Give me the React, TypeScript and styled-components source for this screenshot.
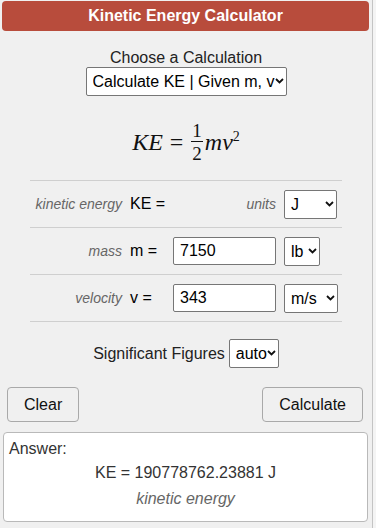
import React from 'react';
import styled, { createGlobalStyle } from 'styled-components';

const GlobalStyle = createGlobalStyle`
  html, body {
    margin: 0;
    padding: 0;
    background: #f4f4f4;
    font-family: "Liberation Sans", Arial, sans-serif;
    color: #222;
  }
`;

const Page = styled.div`
  width: 373px;
  min-height: 528px;
  box-sizing: border-box;
  background: #f0f0f0;
  border-right: 1px solid #c4c4c4;
  padding-top: 1px;
`;

const Header = styled.h1`
  margin: 0 3px 0 2px;
  height: 30px;
  background: #b84c3c;
  border-radius: 4px;
  color: #fff;
  font-size: 16px;
  font-weight: bold;
  display: flex;
  align-items: center;
  justify-content: center;
`;

const Chooser = styled.div`
  display: flex;
  flex-direction: column;
  align-items: center;
  margin-top: 17px;
  font-size: 16px;
`;

const ChooseLabel = styled.div`
  line-height: 19px;
`;

const SelectBox = styled.span<{ $w: number }>`
  position: relative;
  display: inline-block;
  width: ${(p) => p.$w}px;
  height: 29px;
`;

const Select = styled.select`
  appearance: none;
  width: 100%;
  height: 100%;
  font-family: "Liberation Sans", Arial, sans-serif;
  font-size: 16px;
  color: #000;
  background: #fff;
  border: 1px solid #767676;
  border-radius: 2px;
  padding: 0 0 0 6px;
  box-sizing: border-box;
`;

const Chevron = styled.svg`
  position: absolute;
  right: 3px;
  top: 11px;
  width: 9px;
  height: 6px;
  pointer-events: none;
`;

type DropProps = { w: number; options: string[] };

const Dropdown = ({ w, options }: DropProps) => (
  <SelectBox $w={w}>
    <Select defaultValue={options[0]}>
      {options.map((o) => (
        <option key={o}>{o}</option>
      ))}
    </Select>
    <Chevron viewBox="0 0 9 6">
      <path d="M1 1l3.5 3.5L8 1" fill="none" stroke="#111" strokeWidth="1.8" />
    </Chevron>
  </SelectBox>
);

const Formula = styled.div`
  display: flex;
  justify-content: center;
  align-items: center;
  height: 76px;
  padding-top: 8px;
  font-family: "Liberation Serif", "DejaVu Serif", serif;
  font-size: 24px;
  color: #111;
`;

const Ital = styled.span`
  font-style: italic;
`;

const Eq = styled.span`
  margin: 0 8px 0 7px;
`;

const Frac = styled.span`
  display: inline-flex;
  flex-direction: column;
  align-items: center;
  font-size: 19px;
  line-height: 17px;
  margin-right: 2px;
`;

const Num = styled.span`
  padding: 0 1px 2px;
  border-bottom: 1px solid #111;
`;

const Den = styled.span`
  padding-top: 3px;
`;

const Sup = styled.sup`
  font-size: 14px;
  font-style: normal;
  vertical-align: 9px;
  line-height: 0;
`;

const Table = styled.div`
  margin: 0 30px 0 30px;
  border-bottom: 1px solid #cfcfcf;
`;

const Row = styled.div`
  display: grid;
  grid-template-columns: 92px 51px 103px auto;
  align-items: center;
  height: 46px;
  border-top: 1px solid #cfcfcf;
`;

const Desc = styled.span`
  font-style: italic;
  font-size: 14px;
  color: #666;
  text-align: right;
  white-space: nowrap;
`;

const Sym = styled.span`
  font-size: 16px;
  color: #000;
  padding-left: 8px;
  white-space: nowrap;
`;

const Input = styled.input`
  width: 103px;
  height: 28px;
  box-sizing: border-box;
  border: 1px solid #767676;
  border-radius: 2px;
  font-family: "Liberation Sans", Arial, sans-serif;
  font-size: 16px;
  padding: 0 6px;
  color: #000;
`;

const UnitCell = styled.div`
  padding-left: 8px;
  display: flex;
`;

const SigRow = styled.div`
  display: flex;
  justify-content: center;
  align-items: center;
  gap: 4px;
  margin-top: 17px;
  font-size: 16px;
`;

const ButtonRow = styled.div`
  display: flex;
  justify-content: space-between;
  margin: 19px 9px 0 7px;
`;

const Button = styled.button`
  height: 35px;
  padding: 0 16px;
  font-family: "Liberation Sans", Arial, sans-serif;
  font-size: 16px;
  color: #111;
  background: #f0f0f0;
  border: 1px solid #a9a9a9;
  border-radius: 4px;
`;

const Answer = styled.div`
  margin: 10px 4px 0 3px;
  height: 90px;
  box-sizing: border-box;
  background: #fff;
  border: 1px solid #b9b9b9;
  border-radius: 4px;
  padding: 6px 5px 0;
  font-size: 16px;
  color: #333;
`;

const AnswerTitle = styled.div`
  line-height: 19px;
`;

const AnswerValue = styled.div`
  text-align: center;
  margin-top: 5px;
  line-height: 19px;
`;

const AnswerNote = styled.div`
  text-align: center;
  font-style: italic;
  color: #666;
  margin-top: 7px;
  line-height: 19px;
`;

const rows = [
  { label: 'mass', sym: 'm =', value: '7150', units: ['lb', 'kg', 'g'], w: 36 },
  { label: 'velocity', sym: 'v =', value: '343', units: ['m/s', 'km/h', 'mph'], w: 54 },
];

export default function App() {
  return (
    <Page>
      <GlobalStyle />
      <Header>Kinetic Energy Calculator</Header>
      <Chooser>
        <ChooseLabel>Choose a Calculation</ChooseLabel>
        <Dropdown
          w={201}
          options={['Calculate KE | Given m, v', 'Calculate m | Given KE, v', 'Calculate v | Given KE, m']}
        />
      </Chooser>
      <Formula>
        <Ital>KE</Ital>
        <Eq>=</Eq>
        <Frac>
          <Num>1</Num>
          <Den>2</Den>
        </Frac>
        <Ital>
          mv<Sup>2</Sup>
        </Ital>
      </Formula>
      <Table>
        <Row>
          <Desc>kinetic energy</Desc>
          <Sym>KE =</Sym>
          <Desc>units</Desc>
          <UnitCell>
            <Dropdown w={53} options={['J', 'kJ', 'MJ']} />
          </UnitCell>
        </Row>
        {rows.map((r) => (
          <Row key={r.label}>
            <Desc>{r.label}</Desc>
            <Sym>{r.sym}</Sym>
            <Input defaultValue={r.value} />
            <UnitCell>
              <Dropdown w={r.w} options={r.units} />
            </UnitCell>
          </Row>
        ))}
      </Table>
      <SigRow>
        Significant Figures
        <Dropdown w={50} options={['auto', '3', '5', '7']} />
      </SigRow>
      <ButtonRow>
        <Button>Clear</Button>
        <Button>Calculate</Button>
      </ButtonRow>
      <Answer>
        <AnswerTitle>Answer:</AnswerTitle>
        <AnswerValue>KE = 190778762.23881 J</AnswerValue>
        <AnswerNote>kinetic energy</AnswerNote>
      </Answer>
    </Page>
  );
}
